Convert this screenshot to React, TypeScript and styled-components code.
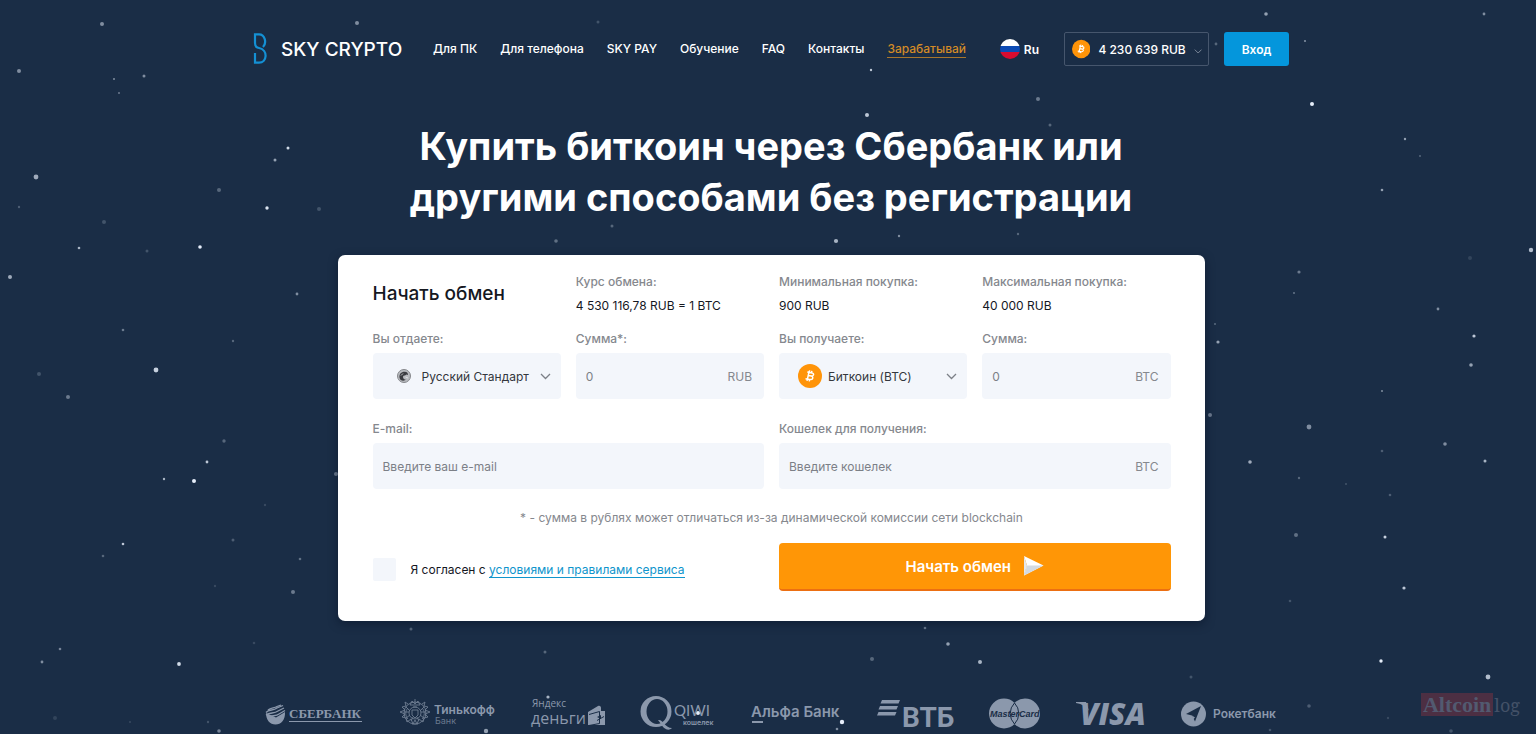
import React from "react";
import styled, { createGlobalStyle } from "styled-components";

const sans = `Inter, "Noto Sans", "Liberation Sans", sans-serif`;
const navy = "#1a2d46";
const muted = "#8b98ac";

const GlobalStyle = createGlobalStyle`
  *, *::before, *::after { box-sizing: border-box; }
  body { margin: 0; background: ${navy}; font-family: ${sans}; color: #fff; }
  button, input, select { font: inherit; color: inherit; }
  a { color: inherit; text-decoration: none; }
`;

const Page = styled.div`
  position: relative;
  min-height: 100vh;
  padding: 32px 0 0 6px;
  overflow: hidden;
  display: flex;
  flex-direction: column;
  align-items: center;
`;

const Sky = styled.svg`
  position: absolute;
  inset: 0;
  width: 100%;
  height: 100%;
  pointer-events: none;
`;

const Header = styled.header`
  width: 100%;
  max-width: 1036px;
  height: 34px;
  display: flex;
  align-items: center;
`;

const Brand = styled.a`
  display: flex;
  align-items: center;
  gap: 14px;
  width: 180px;
  font-size: 19px;
  font-weight: 500;
  white-space: nowrap;
`;

const Nav = styled.nav`
  display: flex;
  justify-content: space-between;
  flex: 0 1 533px;
  font-size: 12px;
  font-weight: 500;
  white-space: nowrap;
`;

const NavLink = styled.a<{ $accent?: boolean }>`
  line-height: 16px;
  color: ${(p) => (p.$accent ? "#d38b26" : "#fff")};
  border-bottom: 1px solid ${(p) => (p.$accent ? "#a8762c" : "transparent")};
`;

const Tools = styled.div`
  display: flex;
  align-items: center;
  margin-left: auto;
  font-size: 12px;
  font-weight: 600;
  white-space: nowrap;
`;

const Language = styled.button`
  display: flex;
  align-items: center;
  gap: 4px;
  padding: 0;
  margin-right: 25px;
  border: 0;
  background: none;
`;

const Reserve = styled.button`
  display: flex;
  align-items: center;
  gap: 8px;
  width: 145px;
  height: 34px;
  padding: 0 6px 0 7px;
  margin-right: 15px;
  border: 1px solid #46566d;
  border-radius: 2px;
  background: none;
  font-weight: 500;

  svg:last-child { margin: 4px 0 0 auto; }
`;

const Login = styled.button`
  width: 65px;
  height: 34px;
  padding: 0;
  border: 0;
  border-radius: 3px;
  background: #0496dc;
`;

const Title = styled.h1`
  max-width: 760px;
  margin: 55px 0 0;
  font-size: 38px;
  line-height: 51px;
  font-weight: 700;
  text-align: center;
`;

const Card = styled.form`
  position: relative;
  width: 100%;
  max-width: 867px;
  margin-top: 32px;
  padding: 18px 34px 30px 35px;
  border-radius: 7px;
  background: #fff;
  color: #15181f;
  box-shadow: 0 3px 10px rgba(5, 15, 35, 0.5);
`;

const Grid = styled.div`
  display: grid;
  grid-template-columns: repeat(4, minmax(0, 1fr));
  column-gap: 15px;
`;

const CardTitle = styled.h2`
  margin: 0;
  font-size: 19px;
  line-height: 42px;
  font-weight: 500;
  white-space: nowrap;
`;

const Fact = styled.div`
  font-size: 12px;
  line-height: 18px;
  white-space: nowrap;
`;

const FactLabel = styled.div`
  margin-bottom: 6px;
  font-weight: 500;
  color: #85888e;
`;

const Field = styled.div<{ $wide?: boolean }>`
  grid-column: span ${(p) => (p.$wide ? 2 : 1)};
  margin-top: ${(p) => (p.$wide ? 21 : 15)}px;
`;

const Label = styled.label`
  display: block;
  margin-bottom: 5px;
  font-size: 12px;
  line-height: 18px;
  font-weight: 500;
  color: #85888e;
`;

const Control = styled.div`
  position: relative;
  display: flex;
  align-items: center;
  height: 46px;
  border-radius: 4px;
  background: #f3f6fb;
  font-size: 12px;
`;

const Input = styled.input`
  flex: 1;
  min-width: 0;
  height: 100%;
  padding: 0 10px;
  border: 0;
  background: none;
  outline: none;

  &::placeholder { color: #7c8087; opacity: 1; }
`;

const Unit = styled.span`
  padding-right: 12px;
  color: #85888e;
`;

const Select = styled.select`
  width: 100%;
  height: 100%;
  padding: 0 26px 0 49px;
  border: 0;
  background: none;
  appearance: none;
  outline: none;
  color: #34373d;
`;

const SelectIcon = styled.span`
  position: absolute;
  left: 19px;
  width: 24px;
  display: flex;
  justify-content: center;
  pointer-events: none;
`;

const SelectArrow = styled.span`
  position: absolute;
  right: 10px;
  display: flex;
  pointer-events: none;
`;

const Note = styled.p`
  margin: 19px 0 16px;
  font-size: 12px;
  line-height: 19px;
  color: #85888e;
  text-align: center;
`;

const Bottom = styled.div`
  display: grid;
  grid-template-columns: 1fr 1fr;
  column-gap: 15px;
  align-items: center;
`;

const Agree = styled.div`
  display: flex;
  align-items: center;
  gap: 15px;
  padding-top: 5px;
  font-size: 12px;
  white-space: nowrap;
`;

const Checkbox = styled.input`
  appearance: none;
  width: 23px;
  height: 23px;
  margin: 0;
  border-radius: 2px;
  background: #f3f6fb;

  &:checked { background: #0496dc; }
`;

const RulesLink = styled.a`
  color: #1095cc;
  border-bottom: 1px solid #1095cc;
`;

const Submit = styled.button`
  display: flex;
  align-items: center;
  justify-content: center;
  gap: 12px;
  height: 48px;
  padding: 0;
  border: 0;
  border-bottom: 2px solid #ec6f12;
  border-radius: 4px;
  background: #ff9606;
  color: #fff;
  font-size: 15px;
  font-weight: 600;
`;

const Partners = styled.footer`
  position: relative;
  display: flex;
  justify-content: center;
  gap: 36px;
  margin-top: 75px;
`;

const Logo = styled.svg`
  display: block;
  flex: none;
  height: 36px;
  overflow: visible;
  fill: ${muted};
  font-family: ${sans};
`;

const Watermark = styled.div`
  position: absolute;
  right: 16px;
  bottom: 17px;
  display: flex;
  align-items: baseline;
  font-family: "Noto Serif", "Liberation Serif", serif;
  font-size: 18px;
  line-height: 24px;
  color: #435167;
`;

const WatermarkMain = styled.span`
  padding: 0 2px;
  margin-right: 1px;
  background: #4c2f43;
  font-family: "Liberation Serif", serif;
  font-size: 22px;
  line-height: 23px;
  font-weight: 700;
  color: #525a70;
`;

/* x, y, radius, opacity */
const stars: number[][] = [
  [102, 24, 2, 0.5], [19, 71, 2, 0.5], [144, 76, 1.5, 0.5], [114, 79, 1, 0.5], [119, 93, 1, 0.4],
  [288, 148, 1.5, 0.9], [275, 160, 1.5, 0.6], [36, 177, 2.4, 0.65], [219, 190, 2, 0.3], [267, 208, 1.7, 0.95],
  [319, 209, 2, 0.2], [19, 207, 1.2, 0.25], [104, 222, 2, 0.2], [200, 247, 1.8, 1], [79, 248, 1.3, 0.7],
  [147, 251, 1.5, 0.2], [10, 277, 2, 0.65], [297, 294, 1.4, 0.5], [123, 330, 1.3, 0.4], [233, 341, 1.2, 0.3],
  [156, 370, 2.4, 0.85], [39, 374, 2, 0.2], [68, 397, 2, 0.4], [224, 441, 1.7, 0.3], [207, 462, 1.4, 0.8],
  [164, 479, 1.2, 0.7], [194, 481, 2, 1], [336, 474, 2, 0.4], [265, 505, 1.2, 0.15], [123, 544, 1.3, 0.8],
  [233, 540, 1.5, 0.25], [103, 556, 1.3, 0.3], [300, 559, 1.3, 0.35], [293, 592, 2, 0.4], [215, 586, 1.2, 0.15],
  [60, 649, 1.3, 0.45], [42, 662, 1.4, 0.5], [179, 664, 1.9, 0.9], [254, 643, 1.3, 0.15], [55, 718, 2, 0.12],
  [208, 722, 1.2, 0.2], [219, 731, 1.8, 0.45], [130, 722, 1, 0.15],
  [1266, 14, 1.8, 0.6], [1484, 14, 1.4, 0.5], [1305, 41, 1.1, 0.5], [1216, 44, 1.4, 0.3], [1312, 104, 2, 1],
  [1405, 139, 1.2, 0.6], [1420, 156, 1, 0.3], [1382, 190, 1.3, 0.6], [1531, 250, 2.2, 0.75], [1470, 258, 2, 0.12],
  [1299, 272, 1.6, 0.4], [1294, 293, 1.1, 0.35], [1438, 309, 1.4, 0.5], [1215, 324, 1.1, 0.3], [1218, 342, 1.6, 0.6],
  [1474, 336, 1.6, 0.8], [1471, 365, 1.8, 0.6], [1382, 391, 1, 0.5], [1210, 415, 2, 0.4], [1309, 427, 2.4, 0.5],
  [1445, 444, 1.8, 0.5], [1382, 451, 1.3, 0.25], [1250, 462, 1.8, 0.65], [1485, 461, 1.5, 0.7], [1299, 478, 1.2, 0.3],
  [1346, 484, 1, 0.2], [1390, 495, 1.3, 0.25], [1296, 535, 2, 0.35], [1385, 537, 1.5, 0.85], [1404, 588, 1.6, 0.8],
  [1290, 601, 1.3, 0.2], [1381, 661, 1.7, 1], [1488, 677, 2.4, 0.75], [1309, 706, 1.8, 0.25], [1388, 718, 1.2, 0.15],
  [1270, 730, 1.3, 0.2], [1451, 731, 1.8, 0.2],
  [357, 23, 2, 0.5], [598, 22, 1.5, 0.2], [871, 70, 1.2, 0.8], [867, 115, 2, 0.8], [1038, 99, 2, 0.4],
  [836, 241, 2.1, 0.7], [899, 236, 1.2, 0.5], [556, 241, 1.8, 0.35], [612, 226, 1.5, 0.3], [1050, 125, 1.5, 0.3],
  [1095, 153, 1.3, 0.3], [1018, 234, 1.2, 0.3], [545, 652, 1.5, 0.3], [948, 644, 1.8, 0.6], [980, 662, 2, 0.7],
  [872, 659, 2, 0.3], [411, 629, 1.5, 0.3], [925, 628, 1.3, 0.4], [1191, 677, 1.5, 0.2], [486, 731, 2.2, 0.6],
  [842, 722, 2.2, 1], [837, 729, 1.3, 0.5], [548, 697, 1.6, 0.7], [698, 713, 2, 1],
];

const BitcoinIcon = ({ size }: { size: number }) => (
  <svg width={size} height={size} viewBox="0 0 24 24" aria-hidden="true">
    <circle cx="12" cy="12" r="12" fill="#ff9409" />
    <path
      d="M9.300 8l4.700.9c2.600.8 1.700 3.400-.8 3.100c2.600.7 1.900 4-1.500 3.500l-4.200-.8M10.900 8.300l-1.400 6.500M10.400 11.500l3 .6M11.700 6.300l-.4 1.800M13.900 6.800l-.4 1.800M9.400 15l-.4 1.800M11.600 15.500l-.4 1.800"
      fill="none" stroke="#fff" strokeWidth="1.500"
    />
  </svg>
);

const EagleIcon = () => (
  <svg width="14" height="14" viewBox="0 0 14 14" aria-hidden="true">
    <circle cx="7" cy="7" r="6.500" fill="#b9bbbf" stroke="#85878b" />
    <path d="M2.500 8.500C2 5 4.500 2.500 8 2.800c2 .2 3.200 1.600 3 3.200L9.500 5.500 8 6.500C6 6 5.500 8 6.500 9.500c.6 1 1.800 1.500 3 1C7 12.500 3 12 2.500 8.500z" fill="#3b3c40" />
    <path d="M4 6.500l2-2M8.500 8l2.500 1" stroke="#e7e8ea" strokeWidth=".8" />
  </svg>
);

const PlaneIcon = () => (
  <svg width="21" height="20" viewBox="0 0 21 20" aria-hidden="true">
    <path d="M1 0l19.500 9.500L1 19.500l3-10z" fill="#fff" />
    <path d="M4 9.500h16.500L1 19.500z" fill="#d3dae2" />
    <path d="M1 0l3 9.500L1 19.500z" fill="#e4e8ee" />
  </svg>
);

const Chevron = ({ color, size = 11 }: { color: string; size?: number }) => (
  <svg width={size} height={7} viewBox="0 0 11 7" aria-hidden="true">
    <path d="M1 1l4.500 4.500L10 1" fill="none" stroke={color} strokeWidth="1.300" />
  </svg>
);

const PartnerLogos = () => (
  <Partners>
    <Logo width="97" viewBox="0 0 97 36">
      <path d="M0 17c0 7 4 11.500 9.500 11.500S19.500 24 19 16l-9 5.500z" />
      <path d="M0 16.500C3 13 7 15 11 12l6-2.500M0 19c4-3 8-1 12-4l6-3M2 14c3-3 6-1.500 9-3.500l4-1.500M2 21c4-2 8-.5 11-3l6-3.500" fill="none" stroke={muted} strokeWidth="1.300" />
      <text x="23" y="22" fontFamily="Liberation Serif, serif" fontSize="13" fontWeight="700">СБЕРБАНК</text>
      <path d="M23 25.500h73" stroke={muted} />
    </Logo>
    <Logo width="96" viewBox="0 0 96 36">
      <g fill="none" stroke={muted} strokeWidth=".9" opacity=".75">
        <circle cx="16" cy="17" r="6" />
        <circle cx="16" cy="17" r="11" />
        <path d="M13 14h6v5l-3 3-3-3zM11 9l2-4 3 3 3-3 2 4zM16 3v4M9 8L6 6l1 4-4 1 3 3-5 2 5 2-3 3 4 1 1 4 4-3 2 5 2-4 2 4 2-5 4 3 1-4 4-1-3-3 5-2-5-2 3-3-4-1 1-4-3 2" />
        <path d="M7 11l4 4M7 22l4-3M25 11l-4 4M25 22l-4-3M5 16h5M22 16h5M12 25l2-4M20 25l-2-4M9 12c-3 3-3 8 0 11M23 12c3 3 3 8 0 11M14 11h4M13 28h6" />
      </g>
      <text x="35" y="18" fontSize="12" fontWeight="600">Тинькофф</text>
      <text x="36" y="28" fontSize="9" opacity=".7">Банк</text>
    </Logo>
    <Logo width="73" viewBox="0 0 73 36">
      <g fontFamily="Open Sans, sans-serif">
        <text x="1" y="11" fontSize="10">Яндекс</text>
        <text x="0" y="28" fontSize="16">деньги</text>
      </g>
      <path d="M57 16l10-6c2-.7 3 .4 3 2v3h4v14H57z" />
      <path d="M58 18.500l10.500-3v12L58 29.500M73 20.500l-7 4" fill="none" stroke={navy} />
      <path d="M66 21l4-2v4z" fill={navy} />
    </Logo>
    <Logo width="75" viewBox="0 0 75 36">
      <path fillRule="evenodd" d="M16 0a15.500 15.500 0 1 0 0 31 15.500 15.500 0 1 0 0-31zM17 3a10.500 12.500 0 1 1 0 25 10.500 12.500 0 1 1 0-25z" />
      <path d="M18 24c5-1 7 8 14 8-4 4-9 0-11-4z" />
      <text x="34" y="20" fontFamily="Lato, sans-serif" fontSize="15">QIWI</text>
      <text x="43" y="29" fontSize="7" fontWeight="600">кошелек</text>
    </Logo>
    <Logo width="90" viewBox="0 0 90 36">
      <text x="0" y="21" fontSize="15" fontWeight="600">Альфа Банк</text>
      <path d="M1 26h11" stroke={muted} strokeWidth="2" />
    </Logo>
    <Logo width="76" viewBox="0 0 76 36">
      <path d="M5 4h18l-1.500 3.500h-18zM3 10h18l-1.500 3.500h-18zM1.500 16h18l-1.500 3.500H0z" />
      <text x="25" y="31" fontFamily="Roboto, sans-serif" fontSize="28" fontWeight="700">ВТБ</text>
    </Logo>
    <Logo width="51" viewBox="0 0 51 36">
      <circle cx="15" cy="17.500" r="15" />
      <circle cx="36" cy="17.500" r="15" />
      <path d="M25.500 7a15 15 0 0 1 0 21M25.500 7a15 15 0 0 0 0 21" fill="none" stroke={navy} />
      <text x="1" y="21" fill={navy} fontFamily="Liberation Sans, sans-serif" fontSize="9" fontWeight="700" fontStyle="italic">MasterCard</text>
    </Logo>
    <Logo width="69" viewBox="0 0 69 36">
      <path d="M0 6h10l3 9C11 11 6 8 0 7z" />
      <text x="4" y="29" fontFamily="Open Sans, sans-serif" fontSize="30" fontWeight="800" fontStyle="italic">VISA</text>
    </Logo>
    <Logo width="96" viewBox="0 0 96 36">
      <circle cx="12.500" cy="18" r="12.500" />
      <path d="M20 10L5 18l6 1.500 3 6z" fill={navy} />
      <path d="M11 19.500l1 4 2-2z" fill={muted} />
      <text x="32" y="22" fontSize="12" fontWeight="600">Рокетбанк</text>
    </Logo>
  </Partners>
);

const links = ["Для ПК", "Для телефона", "SKY PAY", "Обучение", "FAQ", "Контакты"];

const facts = [
  ["Курс обмена:", "4 530 116,78 RUB = 1 BTC"],
  ["Минимальная покупка:", "900 RUB"],
  ["Максимальная покупка:", "40 000 RUB"],
];

export default function App() {
  return (
    <Page>
      <GlobalStyle />
      <Sky viewBox="0 0 1536 734" preserveAspectRatio="xMidYMin slice" aria-hidden="true">
        {stars.map(([x, y, r, o]) => (
          <circle key={`${x}-${y}`} cx={x} cy={y} r={r} fill="#e6eefa" opacity={o} />
        ))}
      </Sky>
      <Header>
        <Brand href="#">
          <svg width="14" height="32" viewBox="0 0 14 32" aria-hidden="true">
            <path d="M10 14c4-4 2-12.700-4-12.700H2V10c0 3 1 4.500 4 5 9.500 2 8 14.700 0 14.700H2V20" fill="none" stroke="#1490d4" strokeWidth="2.200" />
          </svg>
          SKY CRYPTO
        </Brand>
        <Nav>
          {links.map((l) => <NavLink key={l} href="#">{l}</NavLink>)}
          <NavLink href="#" $accent>Зарабатывай</NavLink>
        </Nav>
        <Tools>
          <Language type="button">
            <svg width="20" height="20" viewBox="0 0 20 20" aria-hidden="true">
              <clipPath id="flag"><circle cx="10" cy="10" r="10" /></clipPath>
              <g clipPath="url(#flag)">
                <rect width="20" height="7" fill="#fff" />
                <rect y="7" width="20" height="6" fill="#0c4bb5" />
                <rect y="13" width="20" height="7" fill="#d80c30" />
              </g>
            </svg>
            Ru
          </Language>
          <Reserve type="button" aria-haspopup="listbox">
            <BitcoinIcon size={20} />
            4 230 639 RUB
            <Chevron color="#7b8799" size={9} />
          </Reserve>
          <Login type="button">Вход</Login>
        </Tools>
      </Header>
      <Title>Купить биткоин через Сбербанк или другими способами без регистрации</Title>
      <Card>
        <Grid>
          <CardTitle>Начать обмен</CardTitle>
          {facts.map(([k, v]) => (
            <Fact key={k}><FactLabel>{k}</FactLabel>{v}</Fact>
          ))}
          <Field>
            <Label htmlFor="give">Вы отдаете:</Label>
            <Control>
              <SelectIcon><EagleIcon /></SelectIcon>
              <Select id="give"><option>Русский Стандарт</option></Select>
              <SelectArrow><Chevron color="#7c8087" /></SelectArrow>
            </Control>
          </Field>
          <Field>
            <Label htmlFor="giveSum">Сумма*:</Label>
            <Control><Input id="giveSum" placeholder="0" /><Unit>RUB</Unit></Control>
          </Field>
          <Field>
            <Label htmlFor="get">Вы получаете:</Label>
            <Control>
              <SelectIcon><BitcoinIcon size={24} /></SelectIcon>
              <Select id="get"><option>Биткоин (BTC)</option></Select>
              <SelectArrow><Chevron color="#7c8087" /></SelectArrow>
            </Control>
          </Field>
          <Field>
            <Label htmlFor="getSum">Сумма:</Label>
            <Control><Input id="getSum" placeholder="0" /><Unit>BTC</Unit></Control>
          </Field>
          <Field $wide>
            <Label htmlFor="email">E-mail:</Label>
            <Control><Input id="email" type="email" placeholder="Введите ваш e-mail" /></Control>
          </Field>
          <Field $wide>
            <Label htmlFor="wallet">Кошелек для получения:</Label>
            <Control><Input id="wallet" placeholder="Введите кошелек" /><Unit>BTC</Unit></Control>
          </Field>
        </Grid>
        <Note>* - сумма в рублях может отличаться из-за динамической комиссии сети blockchain</Note>
        <Bottom>
          <Agree>
            <Checkbox id="agree" type="checkbox" />
            <label htmlFor="agree">Я согласен с <RulesLink href="#">условиями и правилами сервиса</RulesLink></label>
          </Agree>
          <Submit type="submit">Начать обмен<PlaneIcon /></Submit>
        </Bottom>
      </Card>
      <PartnerLogos />
      <Watermark><WatermarkMain>Altcoin</WatermarkMain>log</Watermark>
    </Page>
  );
}
